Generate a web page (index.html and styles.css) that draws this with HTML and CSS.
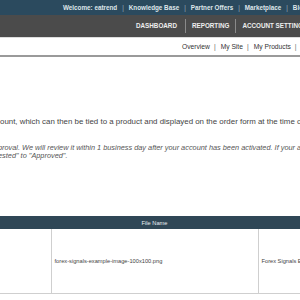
FILE: index.html
```html
<!DOCTYPE html>
<html lang="en">

<head>
	<meta charset="UTF-8">
	<meta name="viewport" content="width=device-width, initial-scale=1.0">
	<title>Account Settings</title>
	<link rel="stylesheet" href="styles.css">
</head>

<body>
	<div class="topbar">
		<span>Welcome: eatrend</span><span class="sep">|</span>
		<a href="#">Knowledge Base</a><span class="sep">|</span>
		<a href="#">Partner Offers</a><span class="sep">|</span>
		<a href="#">Marketplace</a><span class="sep">|</span>
		<a href="#">Blog</a>
	</div>
	<div class="mainnav">
		<a href="#">DASHBOARD</a>
		<a href="#">REPORTING</a>
		<a href="#">ACCOUNT SETTINGS</a>
	</div>
	<div class="subnav">
		<a href="#">Overview</a><span class="sep">|</span>
		<a href="#">My Site</a><span class="sep">|</span>
		<a href="#">My Products</a><span class="sep">|</span>
		<a href="#">Images</a>
	</div>
	<div class="content">
		<p class="intro">ount, which can then be tied to a product and displayed on the order form at the time of purchase.</p>
		<p class="note">proval. We will review it within 1 business day after your account has been activated. If your account is already active,<br>ested" to "Approved".</p>
		<table class="files">
			<thead>
				<tr>
					<th class="c1"></th>
					<th class="c2">File Name</th>
					<th class="c3"></th>
				</tr>
			</thead>
			<tbody>
				<tr>
					<td class="c1"></td>
					<td class="c2">forex-signals-example-image-100x100.png</td>
					<td class="c3">Forex Signals Example</td>
				</tr>
			</tbody>
		</table>
	</div>
</body>

</html>
```

FILE: styles.css
```css
body {
	margin: 0;
	width: 300px;
	overflow: hidden;
	font-family: "Liberation Sans", Arial, sans-serif;
	background: white;
}

a {
	color: inherit;
	text-decoration: none;
}

.topbar {
	display: flex;
	align-items: center;
	height: 15px;
	padding-left: 63px;
	background-color: #2b4a5e;
	color: #dfe6ea;
	font-size: 6.3px;
	font-weight: bold;
	white-space: nowrap;
}

.topbar .sep {
	margin: 0 5px;
	color: #9fb0bb;
	font-weight: normal;
}

.mainnav {
	display: flex;
	align-items: center;
	height: 22px;
	padding-left: 136px;
	background-color: #4b4b4b;
	border-bottom: 1px solid #ddd;
	white-space: nowrap;
}

.mainnav a {
	color: #eee;
	font-size: 6.3px;
	font-weight: bold;
	padding: 0 6px;
	line-height: 14px;
	border-left: 1px solid #8a8a8a;
}

.mainnav a:first-child {
	padding-left: 0;
	padding-right: 8px;
	border-left: none;
}

.subnav {
	display: flex;
	align-items: center;
	height: 17px;
	padding-left: 182px;
	border-bottom: 2px solid #9a9a9a;
	color: #333;
	font-size: 6.7px;
	white-space: nowrap;
}

.subnav .sep {
	margin: 0 5px 0 4px;
	color: #666;
}

.content {
	white-space: nowrap;
}

.intro {
	margin: 60px 0 0;
	color: #444;
	font-size: 7.9px;
}

.note {
	margin: 18px 0 0 -2px;
	color: #555;
	font-size: 7.35px;
	font-style: italic;
	line-height: 7.6px;
}

.files {
	margin-top: 57px;
	border-collapse: collapse;
	width: 420px;
	table-layout: fixed;
	font-size: 5.7px;
	color: #444;
}

.files th {
	height: 13px;
	padding: 0;
	background-color: #2f4756;
	color: #e8eef2;
	font-weight: normal;
}

.files td {
	height: 64px;
	padding: 0 3px;
	border-right: 1.5px solid #cfcfcf;
	border-bottom: 1.5px solid #cfcfcf;
}

.files .c1 {
	width: 51px;
}

.files .c2 {
	width: 207px;
}
```
